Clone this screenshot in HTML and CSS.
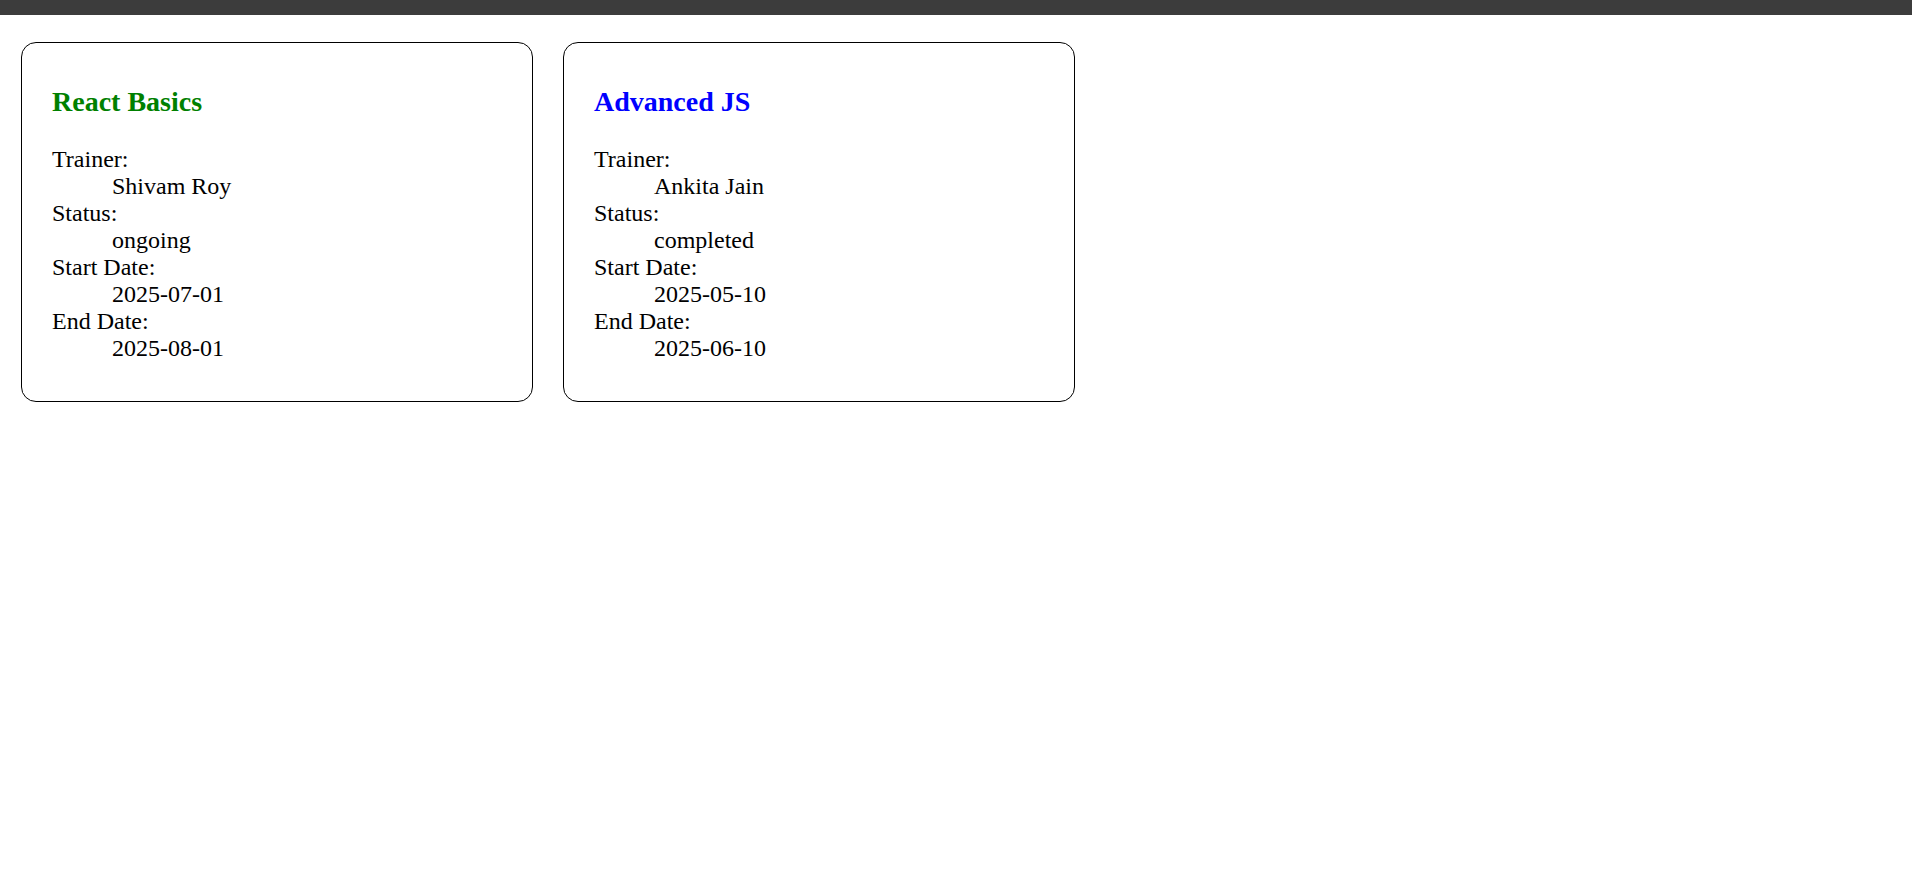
FILE: index.html
```html
<!DOCTYPE html>
<html>
<head>
<meta charset="utf-8">
<link rel="stylesheet" href="styles.css">
</head>
<body>
<div class="topbar"></div>
<div class="cards">
  <div class="card">
    <h3 class="title green">React Basics</h3>
    <dl class="info">
      <dt>Trainer:</dt><dd>Shivam Roy</dd>
      <dt>Status:</dt><dd>ongoing</dd>
      <dt>Start Date:</dt><dd>2025-07-01</dd>
      <dt>End Date:</dt><dd>2025-08-01</dd>
    </dl>
  </div>
  <div class="card">
    <h3 class="title blue">Advanced JS</h3>
    <dl class="info">
      <dt>Trainer:</dt><dd>Ankita Jain</dd>
      <dt>Status:</dt><dd>completed</dd>
      <dt>Start Date:</dt><dd>2025-05-10</dd>
      <dt>End Date:</dt><dd>2025-06-10</dd>
    </dl>
  </div>
</div>
</body>
</html>
```
FILE: styles.css
```css
html, body {
  margin: 0;
  padding: 0;
  background: #fff;
}
body {
  font-family: "Liberation Serif", "Times New Roman", serif;
  font-size: 24px;
  color: #000;
}
.topbar {
  height: 15px;
  background: #3c3c3c;
}
.cards {
  display: flex;
  align-items: flex-start;
  gap: 30px;
  padding: 27px 0 0 21px;
}
.card {
  box-sizing: border-box;
  width: 512px;
  border: 1px solid #000;
  border-radius: 15px;
  padding: 15px 30px;
}
.title {
  font-size: 28px;
  font-weight: bold;
  margin: 28px 0;
}
.green { color: #008000; }
.blue { color: #0000ff; }
.info {
  margin: 24px 0;
}
.info dt {
  margin: 0;
}
.info dd {
  margin: 0 0 0 60px;
}
```
